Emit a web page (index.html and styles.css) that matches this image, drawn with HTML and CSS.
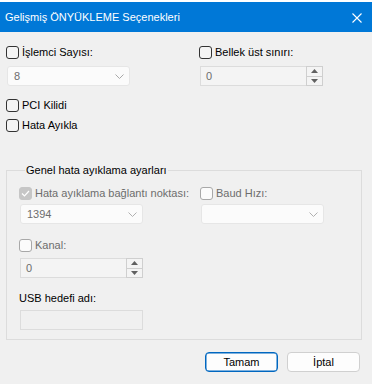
FILE: index.html
```html
<!DOCTYPE html>
<html lang="tr">
<head>
<meta charset="utf-8">
<title>Gelişmiş ÖNYÜKLEME Seçenekleri</title>
<link rel="stylesheet" href="styles.css">
</head>
<body>
<div class="window">
  <div class="titlebar">
    <span class="title">Gelişmiş ÖNYÜKLEME Seçenekleri</span>
    <svg class="close" width="10" height="10" viewBox="0 0 10 10"><path d="M0.5 0.5L9.5 9.5M9.5 0.5L0.5 9.5" stroke="#fff" stroke-width="1.1" fill="none"/></svg>
  </div>
  <div class="content">
    <div class="row top">
      <div class="field">
        <div class="check"><span class="box"></span><span>İşlemci Sayısı:</span></div>
        <div class="combo gap7"><span class="val">8</span><svg class="chev" width="9" height="5" viewBox="0 0 9 5"><path d="M0.5 0.5L4.5 4.5L8.5 0.5" stroke="#a8a8a8" fill="none"/></svg></div>
      </div>
      <div class="field">
        <div class="check"><span class="box"></span><span>Bellek üst sınırı:</span></div>
        <div class="spin gap7"><span class="val">0</span>
          <div class="spinbtns">
            <span class="sb"><svg width="7" height="4" viewBox="0 0 7 4"><path d="M0 4L3.5 0L7 4Z" fill="#606060"/></svg></span>
            <span class="sb"><svg width="7" height="4" viewBox="0 0 7 4"><path d="M0 0L3.5 4L7 0Z" fill="#606060"/></svg></span>
          </div>
        </div>
      </div>
    </div>
    <div class="check pci"><span class="box"></span><span>PCI Kilidi</span></div>
    <div class="check debug"><span class="box"></span><span>Hata Ayıkla</span></div>

    <fieldset class="group">
      <legend>Genel hata ayıklama ayarları</legend>
      <div class="row inner">
        <div class="field">
          <div class="check dis"><span class="box checked"><svg width="9" height="7" viewBox="0 0 9 7"><path d="M1 3.5L3.5 6L8 1" stroke="#fff" stroke-width="1.2" fill="none"/></svg></span><span>Hata ayıklama bağlantı noktası:</span></div>
          <div class="combo gap3"><span class="val">1394</span><svg class="chev" width="9" height="5" viewBox="0 0 9 5"><path d="M0.5 0.5L4.5 4.5L8.5 0.5" stroke="#b0b0b0" fill="none"/></svg></div>
        </div>
        <div class="field">
          <div class="check dis"><span class="box"></span><span>Baud Hızı:</span></div>
          <div class="combo gap3"><span class="val"></span><svg class="chev" width="9" height="5" viewBox="0 0 9 5"><path d="M0.5 0.5L4.5 4.5L8.5 0.5" stroke="#b0b0b0" fill="none"/></svg></div>
        </div>
      </div>
      <div class="field kanal">
        <div class="check dis"><span class="box"></span><span>Kanal:</span></div>
        <div class="spin gap6"><span class="val">0</span>
          <div class="spinbtns">
            <span class="sb"><svg width="7" height="4" viewBox="0 0 7 4"><path d="M0 4L3.5 0L7 4Z" fill="#606060"/></svg></span>
            <span class="sb"><svg width="7" height="4" viewBox="0 0 7 4"><path d="M0 0L3.5 4L7 0Z" fill="#606060"/></svg></span>
          </div>
        </div>
      </div>
      <div class="usb">
        <div class="label">USB hedefi adı:</div>
        <div class="textbox"></div>
      </div>
    </fieldset>

    <div class="buttons">
      <button class="btn primary">Tamam</button>
      <button class="btn">İptal</button>
    </div>
  </div>
</div>
</body>
</html>
```
FILE: styles.css
```css
* { box-sizing: border-box; }
html, body { margin: 0; padding: 0; }
body {
  width: 372px;
  height: 384px;
  overflow: hidden;
  background: #f0f0f0;
  font-family: "Liberation Sans", Arial, sans-serif;
  font-size: 11px;
  color: #000;
}
.window { width: 372px; height: 384px; }
.titlebar {
  margin-top: 2px;
  height: 30px;
  background: #0078d7;
  display: flex;
  align-items: center;
  justify-content: space-between;
  padding: 0 10px 0 5px;
  box-shadow: 0 -2px 0 #fff;
}
.title { color: #fff; font-size: 11px; line-height: 16px; }
.close { display: block; margin-top: 1px; }
.content { padding: 0 10px 0 6px; }
.row { display: grid; }
.row.top { grid-template-columns: 193px 1fr; margin-top: 14px; }
.field { display: flex; flex-direction: column; align-items: flex-start; }
.check {
  display: flex;
  align-items: center;
  height: 13px;
  gap: 3px;
  line-height: 13px;
  white-space: nowrap;
}
.box {
  width: 13px;
  height: 13px;
  border: 1px solid #333;
  border-radius: 3px;
  background: #f4f4f4;
  display: flex;
  align-items: center;
  justify-content: center;
  flex: none;
}
.check.dis { color: #6d6d6d; }
.check.dis .box { border-color: #a8a8a8; background: #fbfbfb; }
.check.dis .box.checked { background: #c6c6c6; border-color: #c6c6c6; }
.combo, .spin, .textbox {
  width: 123px;
  height: 20px;
  margin-left: 1px;
  display: flex;
  align-items: center;
  justify-content: space-between;
}
.combo {
  background: #fbfbfb;
  border: 1px solid #e6e6e6;
  border-radius: 3px;
  padding: 0 5px 0 6px;
}
.val { color: #6d6d6d; line-height: 16px; }
.spin {
  background: #f4f4f4;
  border: 1px solid #dcdcdc;
  padding-left: 5px;
}
.spinbtns {
  display: flex;
  flex-direction: column;
  height: 20px;
  margin: -1px -1px -1px 0;
  width: 17px;
}
.sb {
  flex: 1;
  border: 1px solid #cfcfcf;
  background: #f4f4f4;
  display: flex;
  align-items: center;
  justify-content: center;
}
.sb + .sb { border-top: 0; }
.gap7 { margin-top: 7px; }
.gap6 { margin-top: 6px; }
.gap3 { margin-top: 4px; }
.pci { margin-top: 13px; }
.debug { margin-top: 7px; }
.group {
  margin: 30px 10px 0 0;
  width: 356px;
  border: 1px solid #dcdcdc;
  padding: 9px 10px 9px 12px;
  min-width: 0;
}
.group legend {
  padding: 0 1px;
  margin-left: 6px;
  line-height: 16px;
}
.row.inner { grid-template-columns: 181px 1fr; }
.kanal { margin-top: 15px; }
.usb { margin-top: 12px; }
.usb .label { line-height: 16px; }
.textbox {
  margin-top: 4px;
  background: #f0f0f0;
  border: 1px solid #dcdcdc;
}
.buttons {
  display: flex;
  justify-content: flex-end;
  gap: 9px;
  margin-top: 12px;
  padding-right: 2px;
}
.btn {
  width: 73px;
  height: 20px;
  font-family: "Liberation Sans", Arial, sans-serif;
  font-size: 11px;
  line-height: 16px;
  color: #000;
  background: #fdfdfd;
  border: 1px solid #d0d0d0;
  border-radius: 4px;
  padding: 0;
}
.btn.primary { border: 1px solid #0067c0; box-shadow: inset 0 0 0 0.5px #0067c0; }
```
